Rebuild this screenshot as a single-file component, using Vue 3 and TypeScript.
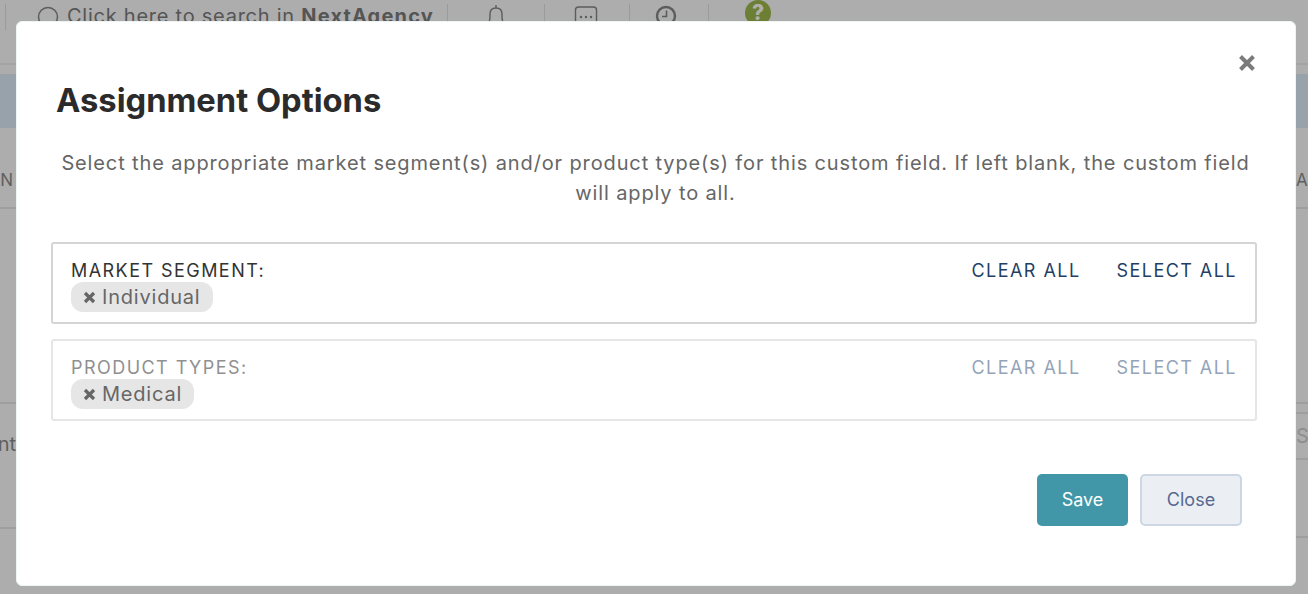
<template>
  <div class="page">
    <header class="topbar">
      <span class="sep first"></span>
      <svg class="search-icon" width="22" height="22" viewBox="0 0 22 22"><circle cx="11" cy="11" r="9.5" fill="none" stroke="#5c5c5c" stroke-width="1.5" /></svg>
      <span class="search-text">Click here to search in <b>NextAgency</b></span>
      <span class="sep s1"></span>
      <svg class="bell" width="24" height="26" viewBox="0 0 24 26"><path d="M3.500 24c1.500-3 2.500-6 2.500-10V11c0-4 2-6 6-6s6 2 6 6v3c0 4 1 7 2.500 10M12 5V2" fill="none" stroke="#5c5c5c" stroke-width="1.4" /></svg>
      <span class="sep s2"></span>
      <svg class="chat" width="24" height="26" viewBox="0 0 24 26"><rect x="1.500" y="4" width="21" height="20" rx="3" fill="none" stroke="#5c5c5c" stroke-width="1.4" /><circle cx="7" cy="14" r="1.200" fill="#5c5c5c" /><circle cx="12" cy="14" r="1.200" fill="#5c5c5c" /><circle cx="17" cy="14" r="1.200" fill="#5c5c5c" /></svg>
      <span class="sep s3"></span>
      <svg class="clock" width="22" height="26" viewBox="0 0 22 26"><circle cx="11" cy="16" r="9" fill="none" stroke="#5c5c5c" stroke-width="2.400" /><path d="M11.500 10.500v6H7" fill="none" stroke="#5c5c5c" stroke-width="1.600" /></svg>
      <span class="sep s4"></span>
      <span class="help">?</span>
    </header>
    <div class="band"></div>
    <div class="columns">
      <div class="col left">
        <div class="row r1"><span class="bg-label">N</span></div>
        <div class="row r2"></div>
        <div class="row r3"><span class="bg-label small">ent</span></div>
      </div>
      <div class="col right">
        <div class="row r1"><span class="bg-label">A</span></div>
        <div class="row r4"></div>
        <div class="row r5"></div>
        <div class="row r6"><span class="bg-label faded">S</span></div>
        <div class="row r7"></div>
      </div>
    </div>

    <div class="modal">
      <button class="close-x" aria-label="Close">
        <svg width="18" height="18" viewBox="0 0 18 18"><path d="M2.500 2.500l13 13M15.500 2.500l-13 13" stroke="#7b7b7b" stroke-width="4" /></svg>
      </button>
      <h2>Assignment Options</h2>
      <p class="intro">
        Select the appropriate market segment(s) and/or product type(s) for this custom field. If left blank, the custom field will apply to all.
      </p>
      <section
        v-for="group in groups"
        :key="group.label"
        class="picker"
        :class="{ disabled: group.disabled }"
      >
        <div class="picker-head">
          <span class="picker-label">{{ group.label }}</span>
          <a class="action clear">CLEAR ALL</a>
          <a class="action">SELECT ALL</a>
        </div>
        <span class="tag">
          <svg width="13" height="13" viewBox="0 0 13 13"><path d="M2 2l9 9M11 2l-9 9" stroke="#666" stroke-width="3.200" /></svg>
          {{ group.value }}
        </span>
      </section>
      <footer>
        <button class="btn save">Save</button>
        <button class="btn close">Close</button>
      </footer>
    </div>
  </div>
</template>

<script setup lang="ts">
const groups = [
  { label: "MARKET SEGMENT:", value: "Individual", disabled: false },
  { label: "PRODUCT TYPES:", value: "Medical", disabled: true },
];
</script>

<style scoped>
.page {
  position: relative;
  height: 594px;
  overflow: hidden;
  background: #adadad;
  font-family: Inter, "Liberation Sans", sans-serif;
}
.topbar {
  height: 65px;
  box-sizing: border-box;
  border-bottom: 2px solid #a3a3a3;
  display: flex;
  align-items: flex-start;
  color: #555;
}
.sep {
  width: 1px;
  height: 26px;
  margin-top: 4px;
  background: #9b9b9b;
  flex: none;
}
.first {
  margin-left: 5px;
}
.search-icon {
  margin: 6px 0 0 31px;
}
.search-text {
  margin: 2px 0 0 8px;
  font-size: 20px;
  line-height: 28px;
  width: 380px;
  white-space: nowrap;
  letter-spacing: 0.75px;
}
.search-text b {
  letter-spacing: 1.18px;
}
.bell {
  margin: 3px 0 0 36px;
}
.s2 {
  margin-left: 36px;
}
.chat {
  margin: 3px 0 0 29px;
}
.s3 {
  margin-left: 31px;
}
.clock {
  margin: 0 0 0 25px;
}
.s4 {
  margin-left: 31px;
}
.help {
  width: 26px;
  height: 26px;
  margin-left: 36px;
  border-radius: 50%;
  background: #6d7f35;
  color: #b0b0a8;
  font-weight: 800;
  font-size: 21px;
  line-height: 26px;
  text-align: center;
  flex: none;
}
.band {
  height: 54px;
  margin-top: 9px;
  background: #98a2ab;
}
.columns {
  display: flex;
  justify-content: space-between;
}
.col {
  flex: none;
  overflow: hidden;
}
.left {
  width: 16px;
  text-align: right;
}
.right {
  width: 12px;
}
.row {
  box-sizing: border-box;
  border-bottom: 2px solid #9e9e9e;
  display: flex;
  align-items: center;
}
.left .row {
  justify-content: flex-end;
}
.r1 {
  height: 81px;
  padding-top: 24px;
}
.r1 .bg-label {
  font-size: 17px;
}
.left .r1 {
  padding-right: 3px;
}
.r2 {
  height: 195px;
}
.r3 {
  height: 125px;
  align-items: flex-start;
  padding-top: 28px;
}
.r4 {
  height: 195px;
}
.r5 {
  height: 10px;
}
.r6 {
  height: 46px;
}
.r7 {
  height: 78px;
}
.bg-label {
  color: #5f5f5f;
  font-size: 20px;
  white-space: nowrap;
}
.bg-label.faded {
  color: #8e8e8e;
}
.modal {
  position: absolute;
  left: 16px;
  top: 21px;
  width: 1280px;
  height: 565px;
  box-sizing: border-box;
  padding: 57px 38px 0 34px;
  background: #fff;
  border: 1px solid #eef3f3;
  border-radius: 6px;
}
.close-x {
  position: absolute;
  left: 1221px;
  top: 32px;
  padding: 0;
  width: 18px;
  height: 18px;
  display: flex;
  border: none;
  background: none;
}
h2 {
  margin: 0 0 0 5px;
  font-size: 32.7px;
  line-height: 42px;
  font-weight: 700;
  color: #2b2b2b;
}
.intro {
  margin: 27px 0 34px;
  padding-left: 3px;
  font-size: 20px;
  line-height: 30px;
  color: #666;
  text-align: center;
  letter-spacing: 0.87px;
}
.picker {
  box-sizing: border-box;
  height: 82px;
  margin-bottom: 15px;
  padding: 14px 18px 0;
  border: 2px solid #d5d5d5;
  border-radius: 3px;
}
.picker.disabled {
  border-color: #e6e6e6;
}
.picker-head {
  display: flex;
  height: 24px;
  align-items: center;
  font-size: 18px;
  letter-spacing: 1.45px;
}
.picker-label {
  flex: 1;
  color: #333;
}
.action {
  color: #1f3f66;
}
.clear {
  margin-right: 36px;
}
.disabled .picker-label {
  color: #909090;
}
.disabled .action {
  color: #94a4b8;
}
.tag {
  display: inline-flex;
  align-items: center;
  gap: 6px;
  height: 30px;
  padding: 0 12px;
  border-radius: 12px;
  background: #e6e6e6;
  color: #666;
  font-size: 20px;
  letter-spacing: 0.8px;
}
footer {
  display: flex;
  justify-content: flex-end;
  gap: 12px;
  margin-top: 53px;
  margin-right: 15px;
}
.btn {
  box-sizing: border-box;
  height: 52px;
  padding: 0 0 2px;
  border-radius: 5px;
  font-family: Inter, "Liberation Sans", sans-serif;
  font-size: 18px;
}
.save {
  width: 91px;
  border: none;
  background: #4197a8;
  color: #fff;
}
.close {
  width: 102px;
  border: 2px solid #cdd7e3;
  background: #ebeff4;
  color: #56698f;
}
</style>
